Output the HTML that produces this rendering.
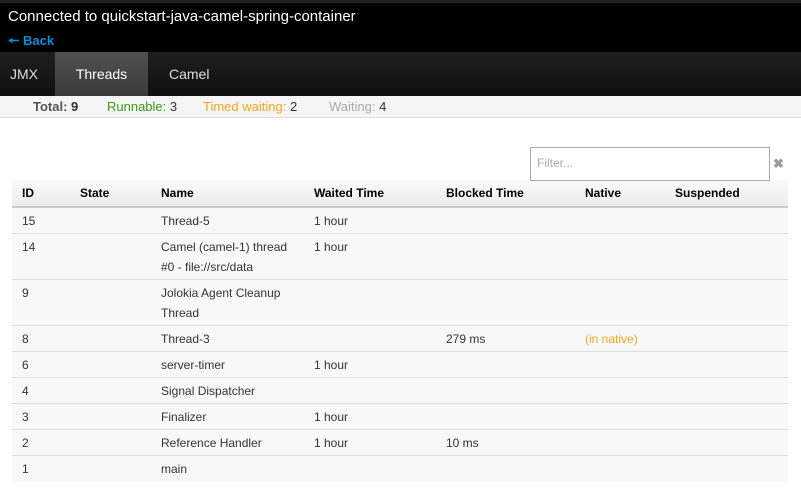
<!DOCTYPE html>
<html><head><meta charset="utf-8"><style>
*{margin:0;padding:0;box-sizing:border-box}
body{width:801px;height:493px;background:#fff;font-family:"Liberation Sans",sans-serif;overflow:hidden;position:relative}
.hdr{position:absolute;left:0;top:0;width:801px;height:52px;background:#000;border-top:3px solid #222}
.hdr .t{position:absolute;left:8px;top:5px;color:#fff;font-size:15px}
.hdr .b{position:absolute;left:8px;top:29px;color:#0a8ed6;font-size:13px;font-weight:bold}
.tabs{position:absolute;left:0;top:52px;width:801px;height:44px;background:linear-gradient(#1e1e1e,#111)}
.tab{position:absolute;top:0;height:44px;line-height:44px;color:#ddd;font-size:14px}
.act{background:linear-gradient(#505050,#3a3a3a);color:#fff}
.stats{position:absolute;left:0;top:96px;width:801px;height:22px;background:#f5f5f5;border-bottom:1px solid #ddd;font-size:13px;line-height:22px}
.stats span{position:absolute;top:0}
.filter{position:absolute;left:530px;top:147px;width:240px;height:34px;border:1px solid #aaa;font-size:12px;color:#aaa;padding:8px 6px;background:#fff;z-index:2}
.x{position:absolute;left:773px;top:156px;color:#999;font-size:13px;font-weight:bold}
table{position:absolute;left:12px;top:180px;width:776px;border-collapse:collapse;font-size:12px;color:#333;table-layout:fixed}
th{text-align:left;font-weight:bold;color:#000;height:27px;background:linear-gradient(#fafafa,#ececec);border-bottom:2px solid #ccc;padding:0 0 0 10px}
td{background:#f8f8f8;border-top:1px solid #ddd;padding:3px 4px 2px 10px;line-height:20px;vertical-align:top;height:26px}
</style></head><body>
<div class="hdr"><div class="t">Connected to quickstart-java-camel-spring-container</div><div class="b">&#129044; Back</div></div>
<div class="tabs">
<div class="tab" style="left:10px">JMX</div>
<div class="tab act" style="left:55px;width:93px;text-align:center">Threads</div>
<div class="tab" style="left:169px">Camel</div>
</div>
<div class="stats">
<span style="left:33px;color:#555"><b>Total:</b> <b style="color:#333">9</b></span>
<span style="left:107px;color:#3c9a1c">Runnable: <span style="position:static;color:#333">3</span></span>
<span style="left:203px;color:#f4a71d">Timed waiting: <span style="position:static;color:#333">2</span></span>
<span style="left:329px;color:#aaa">Waiting: <span style="position:static;color:#333">4</span></span>
</div>
<div class="filter">Filter...</div><div class="x">✖</div>
<table>
<colgroup><col style="width:58px"><col style="width:81px"><col style="width:153px"><col style="width:132px"><col style="width:139px"><col style="width:90px"><col></colgroup>
<tr><th>ID</th><th>State</th><th>Name</th><th>Waited Time</th><th>Blocked Time</th><th>Native</th><th>Suspended</th></tr>
<tr><td>15</td><td></td><td>Thread-5</td><td>1 hour</td><td></td><td></td><td></td></tr>
<tr><td>14</td><td></td><td>Camel (camel-1) thread #0 - file://src/data</td><td>1 hour</td><td></td><td></td><td></td></tr>
<tr><td>9</td><td></td><td>Jolokia Agent Cleanup Thread</td><td></td><td></td><td></td><td></td></tr>
<tr><td>8</td><td></td><td>Thread-3</td><td></td><td>279 ms</td><td style="color:#f4a71d">(in native)</td><td></td></tr>
<tr><td>6</td><td></td><td>server-timer</td><td>1 hour</td><td></td><td></td><td></td></tr>
<tr><td>4</td><td></td><td>Signal Dispatcher</td><td></td><td></td><td></td><td></td></tr>
<tr><td>3</td><td></td><td>Finalizer</td><td>1 hour</td><td></td><td></td><td></td></tr>
<tr><td>2</td><td></td><td>Reference Handler</td><td>1 hour</td><td>10 ms</td><td></td><td></td></tr>
<tr><td>1</td><td></td><td>main</td><td></td><td></td><td></td><td></td></tr>
</table>
</body></html>
